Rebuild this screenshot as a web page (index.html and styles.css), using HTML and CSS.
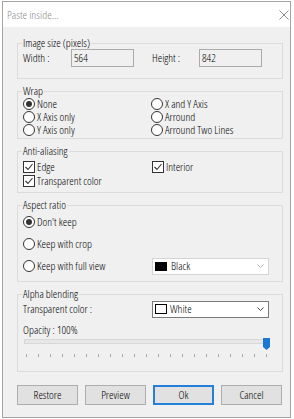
FILE: index.html
```html
<!DOCTYPE html>
<html>
<head>
<meta charset="utf-8">
<link rel="stylesheet" href="styles.css">
</head>
<body>
<div class="window">
  <div class="titlebar">
    <span class="title">Paste inside...</span>
    <svg class="close" width="10" height="10" viewBox="0 0 10 10"><path d="M0.5 0.5L9.5 9.5M9.5 0.5L0.5 9.5" stroke="#8a8a8a" stroke-width="1" fill="none"/></svg>
  </div>
  <div class="content">
    <fieldset class="group g-size">
      <legend>Image size (pixels)</legend>
      <div class="size-row">
        <span class="lbl-w">Width :</span><span class="field">564</span>
        <span class="lbl-h">Height :</span><span class="field">842</span>
      </div>
    </fieldset>

    <fieldset class="group g-wrap">
      <legend>Wrap</legend>
      <div class="grid grid-wrap">
        <div class="opt"><span class="radio on"></span>None</div>
        <div class="opt"><span class="radio"></span>X and Y Axis</div>
        <div class="opt"><span class="radio"></span>X Axis only</div>
        <div class="opt"><span class="radio"></span>Arround</div>
        <div class="opt"><span class="radio"></span>Y Axis only</div>
        <div class="opt"><span class="radio"></span>Arround Two Lines</div>
      </div>
    </fieldset>

    <fieldset class="group g-aa">
      <legend>Anti-aliasing</legend>
      <div class="grid grid-aa">
        <div class="opt"><span class="check"><svg width="10" height="10" viewBox="0 0 10 10"><path d="M1.5 5L4 7.5L8.5 2" stroke="#333" stroke-width="1.1" fill="none"/></svg></span>Edge</div>
        <div class="opt"><span class="check"><svg width="10" height="10" viewBox="0 0 10 10"><path d="M1.5 5L4 7.5L8.5 2" stroke="#333" stroke-width="1.1" fill="none"/></svg></span>Interior</div>
        <div class="opt"><span class="check"><svg width="10" height="10" viewBox="0 0 10 10"><path d="M1.5 5L4 7.5L8.5 2" stroke="#333" stroke-width="1.1" fill="none"/></svg></span>Transparent color</div>
      </div>
    </fieldset>

    <fieldset class="group g-aspect">
      <legend>Aspect ratio</legend>
      <div class="grid grid-aspect">
        <div class="opt"><span class="radio on"></span>Don't keep</div>
        <div></div>
        <div class="opt"><span class="radio"></span>Keep with crop</div>
        <div></div>
        <div class="opt"><span class="radio"></span>Keep with full view</div>
        <div class="select select-off">
          <span class="swatch swatch-black"></span><span>Black</span>
          <svg class="chev" width="7" height="4" viewBox="0 0 7 4"><path d="M0.5 0.5L3.5 3.5L6.5 0.5" stroke="#b4b4b4" fill="none"/></svg>
        </div>
      </div>
    </fieldset>

    <fieldset class="group g-alpha">
      <legend>Alpha blending</legend>
      <div class="grid grid-tc">
        <div>Transparent color :</div>
        <div class="select">
          <span class="swatch swatch-white"></span><span>White</span>
          <svg class="chev" width="7" height="4" viewBox="0 0 7 4"><path d="M0.5 0.5L3.5 3.5L6.5 0.5" stroke="#444" fill="none"/></svg>
        </div>
      </div>
      <div class="opacity">Opacity : 100%</div>
      <div class="slider">
        <div class="track"></div>
        <svg class="thumb" width="7" height="12" viewBox="0 0 7 12"><path d="M0 0H7V9L3.5 12L0 9Z" fill="#1a78d2"/></svg>
      </div>
      <div class="ticks">
        <i></i><i></i><i></i><i></i><i></i><i></i><i></i><i></i><i></i><i></i><i></i>
        <i></i><i></i><i></i><i></i><i></i><i></i><i></i><i></i><i></i><i></i>
      </div>
    </fieldset>

    <div class="buttons">
      <button class="btn">Restore</button>
      <button class="btn">Preview</button>
      <button class="btn btn-default">Ok</button>
      <button class="btn">Cancel</button>
    </div>
  </div>
</div>
</body>
</html>
```

FILE: styles.css
```css
* { box-sizing: border-box; }
html, body { margin: 0; padding: 0; background: #ffffff; }
body {
  font-family: "Open Sans", "Liberation Sans", sans-serif;
  font-stretch: 75%;
  font-weight: 330;
  font-size: 11.3px;
  line-height: 14px;
  color: #000;
}
.window {
  margin: 1px 0 0 2px;
  width: 289px;
  height: 417px;
  border: 1px solid #a4a4a4;
  background: #f0f0f0;
  display: flex;
  flex-direction: column;
}
.titlebar {
  height: 25px;
  background: #ffffff;
  display: flex;
  align-items: center;
  justify-content: space-between;
  padding: 0 1px 0 4px;
}
.title { color: #8c8c8c; line-height: 12px; font-size: 11.5px; }
.content {
  flex: 1;
  padding: 10px 0 0 14px;
  display: flex;
  flex-direction: column;
  gap: 6px;
}
.group {
  margin: 0;
  padding: 0 5px;
  border: 1px solid #dcdcdc;
  width: 266px;
  min-width: 0;
}
.group legend {
  padding: 0 1px;
  margin-left: -1px;
  line-height: 12px;
}
.g-size { padding-bottom: 11px; }
.size-row { display: flex; align-items: center; height: 18px; }
.lbl-w { width: 48px; }
.lbl-h { width: 47px; margin-left: 18px; }
.field {
  width: 63px;
  height: 18px;
  border: 1px solid #ababab;
  background: #f0f0f0;
  padding-left: 2px;
  line-height: 16px;
}
.grid { display: grid; grid-template-columns: 129px 1fr; align-items: center; }
.grid-wrap { grid-template-columns: 128px 1fr; grid-auto-rows: 13px; }
.grid-wrap .opt { line-height: 13px; }
.g-wrap { padding-bottom: 2px; }
.g-aa { padding-top: 3px; padding-bottom: 4px; }
.grid-aa { grid-auto-rows: 14px; }
.g-aspect { padding-bottom: 4px; }
.grid-aspect { grid-auto-rows: 22px; }
.opt { display: flex; align-items: center; white-space: nowrap; }
.radio {
  width: 12px; height: 12px;
  border: 1px solid #333;
  border-radius: 50%;
  background: #fff;
  margin-right: 2px;
  display: flex; align-items: center; justify-content: center;
}
.radio.on::after {
  content: "";
  width: 6px; height: 6px;
  border-radius: 50%;
  background: #333;
}
.check {
  width: 12px; height: 12px;
  border: 1px solid #333;
  background: #fff;
  margin-right: 2px;
  display: flex; align-items: center; justify-content: center;
}
.select {
  width: 117px;
  height: 17px;
  border: 1px solid #7a7a7a;
  background: #fff;
  display: flex;
  align-items: center;
  padding-left: 2px;
}
.select-off { border-color: #d4d4d4; }
.swatch { width: 12px; height: 9px; margin-right: 4px; }
.swatch-black { background: #000; }
.swatch-white { background: #fff; border: 1px solid #000; height: 10px; margin-right: 3px; }
.chev { margin-left: auto; margin-right: 4px; }
.grid-tc { height: 18px; }
.opacity { margin-top: 5px; line-height: 14px; }
.slider { position: relative; height: 12px; }
.track {
  margin: 2px 0 0 1px;
  width: 244px;
  height: 5px;
  background: #e7e7e7;
  border: 1px solid #d8d8d8;
}
.thumb { position: absolute; left: 240px; top: -1px; }
.ticks {
  margin: 3px 0 0 3px;
  width: 241px;
  height: 3px;
  display: flex;
  justify-content: space-between;
}
.ticks i { display: block; width: 1px; height: 3px; background: #a8a8a8; }
.g-alpha { padding-bottom: 14px; }
.buttons { display: flex; gap: 7px; margin-top: 7px; }
.btn {
  width: 61px;
  height: 20px;
  padding: 0;
  border: 1px solid #adadad;
  background: #e1e1e1;
  font: inherit;
  color: #000;
}
.btn-default { border: 2px solid #2680d8; }
```
